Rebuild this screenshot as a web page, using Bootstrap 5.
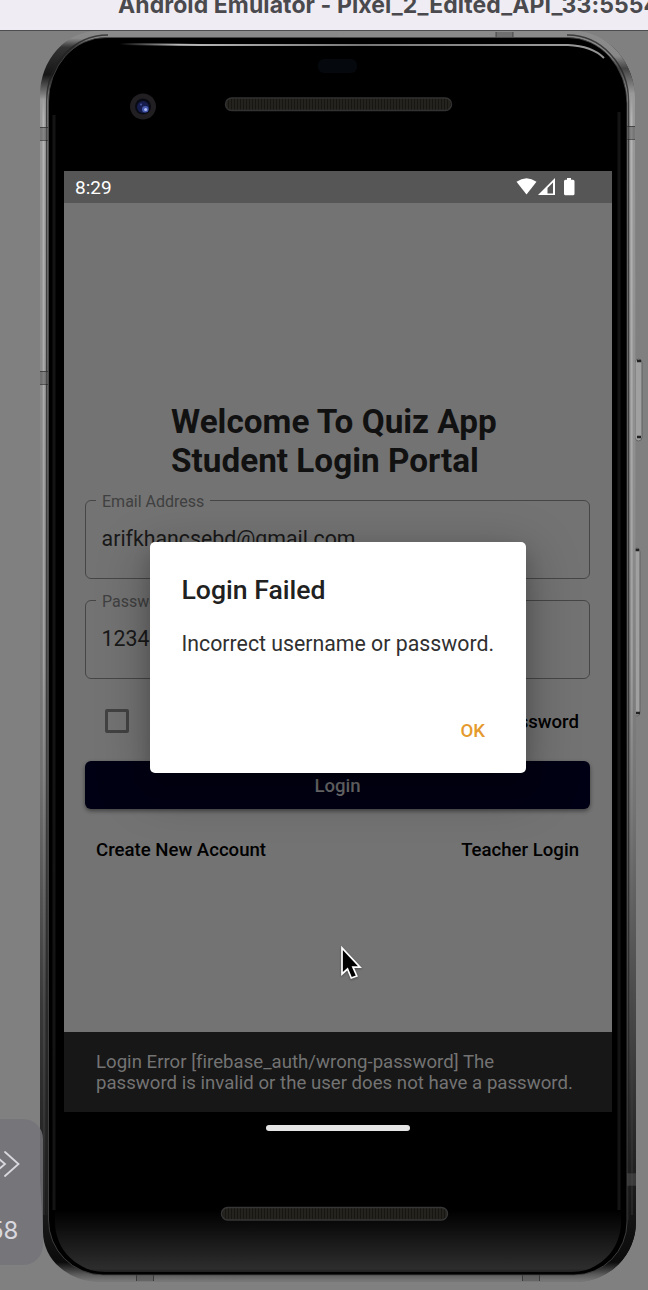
<!DOCTYPE html>
<html lang="en">
<head>
<meta charset="utf-8">
<meta name="viewport" content="width=device-width, initial-scale=1">
<title>Quiz App - Student Login</title>
<link href="https://cdn.jsdelivr.net/npm/bootstrap@5.3.0/dist/css/bootstrap.min.css" rel="stylesheet">
<style>
body{width:648px;height:1290px;background:#808080;font-family:Roboto,"Liberation Sans",sans-serif;color:#000}
.titlebar{height:31px;background:#efedf3;border-bottom:1px solid #4d4d4f;font-family:Inter,sans-serif;font-weight:700;font-size:23px;line-height:30px;letter-spacing:.09px;color:#4a494d;white-space:nowrap}
.titlebar span{display:block;margin-left:118px;margin-top:-10px}
.desk{height:1259px}
.shell{width:648px;height:1259px}
.bezel-top{height:140px}
.screen{width:548px;height:941px;margin-left:64px;background:#737373}
.statusbar{height:32px;background:#565656;color:#fff;font-size:19px;padding:2px 36px 0 11px}
.app-form{padding:199px 22px 0 21px;height:829px}
.welcome{font-size:33.3px;line-height:39px;font-weight:700;color:#111;margin-left:86px}
.field{position:relative;height:79px;border:1.6px solid #464646;border-radius:6px;padding:26px 15.6px 0}
#email{margin-top:20px}
#pass{margin-top:21px}
.field label{position:absolute;left:10px;top:-9px;height:20px;line-height:20px;background:#737373;padding:0 6px 0 6px;font-size:16px;color:#404040}
.field div{font-size:21.3px;line-height:24px;color:#191919}
.options{margin-top:30px;height:24px;padding-right:11px}
.check-square{width:24px;height:24px;border:3px solid #424242;border-radius:2px;margin-left:20px}
.linkish{font-size:18.6px;font-weight:500;line-height:24px}
.options .linkish{padding-top:1px}
.login-btn{height:48px;margin-top:28px;background:#000014;border:0;border-radius:6px;color:#737373;font-size:18.6px;font-weight:500;box-shadow:0 2px 4px rgba(0,0,0,.45);padding:3px 0 0}
.login-btn:hover{background:#000014;color:#737373}
.links{margin-top:29px;padding:0 11px}
.snack{height:80px;background:#171717;color:#737373;font-size:18.6px;line-height:21.3px;letter-spacing:.015px;padding:20px 32px}
.alert-card{left:149.5px;top:511px;width:376.5px;height:231px;background:#fff;border-radius:5px;padding:32px 32px;box-shadow:0 14px 50px 4px rgba(0,0,0,.26),0 10px 18px rgba(0,0,0,.16)}
.alert-card h2{font-size:26.6px;line-height:32px;font-weight:500;color:#212121;margin:0}
.alert-card p{font-size:21.3px;line-height:28px;color:#303030;margin:24px 0 0;white-space:nowrap}
.alert-card b{font-weight:500;font-size:18.6px;line-height:24px;color:#e59a2e;margin:61px 9px 0 0}
.home-bar{width:144px;height:6px;border-radius:3px;background:#e4e4e4;margin:13px 0 0 266px}
.cursor{left:340px;top:914px;filter:drop-shadow(0 1px 1px rgba(0,0,0,.35))}
.mini-panel{left:0;top:1088px;width:43px;height:146px;background:rgba(116,115,121,.82);border-radius:0 20px 20px 0}
.mini-panel span{margin:29px 0 0 -11px;font-family:Inter,sans-serif;font-size:24px;color:#d9d8de;display:block;line-height:30px}
</style>
</head>
<body class="overflow-hidden">
<header class="titlebar overflow-hidden"><span>Android Emulator - Pixel_2_Edited_API_33:5554</span></header>
<main class="desk position-relative overflow-hidden">
  <!-- device body: metal rim, glass, camera and speakers -->
  <svg class="shell position-absolute top-0 start-0" viewBox="0 31 648 1259" aria-hidden="true">
    <defs>
      <linearGradient id="rim" x1="0" y1="31" x2="0" y2="1281" gradientUnits="userSpaceOnUse">
        <stop offset="0" stop-color="#8b8b8b"/><stop offset=".006" stop-color="#888"/><stop offset=".013" stop-color="#333"/><stop offset=".035" stop-color="#161616"/><stop offset=".055" stop-color="#999"/><stop offset=".3" stop-color="#8a8a8a"/><stop offset=".6" stop-color="#707070"/><stop offset=".78" stop-color="#383838"/><stop offset=".94" stop-color="#1c1c1c"/><stop offset=".985" stop-color="#0b0b0b"/><stop offset=".995" stop-color="#5c5c5c"/><stop offset="1" stop-color="#777"/>
      </linearGradient>
      <linearGradient id="rimR" x1="0" y1="31" x2="0" y2="1281" gradientUnits="userSpaceOnUse">
        <stop offset="0" stop-color="#8b8b8b"/><stop offset=".02" stop-color="#888"/><stop offset=".03" stop-color="#444"/><stop offset=".05" stop-color="#999"/><stop offset=".4" stop-color="#8c8c8c"/><stop offset=".62" stop-color="#747474"/><stop offset=".8" stop-color="#444"/><stop offset=".96" stop-color="#111"/><stop offset=".985" stop-color="#0b0b0b"/><stop offset=".995" stop-color="#5c5c5c"/><stop offset="1" stop-color="#777"/>
      </linearGradient>
      <linearGradient id="edge" x1="0" y1="95" x2="0" y2="1230" gradientUnits="userSpaceOnUse">
        <stop offset="0" stop-color="#b4b4b4" stop-opacity="0"/><stop offset=".02" stop-color="#b4b4b4"/><stop offset=".5" stop-color="#a0a0a0"/><stop offset=".8" stop-color="#484848"/><stop offset="1" stop-color="#222"/>
      </linearGradient>
      <linearGradient id="chin" x1="0" y1="1210" x2="0" y2="1275" gradientUnits="userSpaceOnUse">
        <stop offset="0" stop-color="#000"/><stop offset=".9" stop-color="#2d2d2d"/><stop offset="1" stop-color="#151515"/>
      </linearGradient>
      <linearGradient id="shine" x1="120" y1="0" x2="605" y2="0" gradientUnits="userSpaceOnUse">
        <stop offset="0" stop-color="#ccc" stop-opacity="0"/><stop offset=".12" stop-color="#bbb"/><stop offset=".5" stop-color="#777"/><stop offset=".9" stop-color="#999"/><stop offset="1" stop-color="#ccc" stop-opacity=".7"/>
      </linearGradient>
      <pattern id="mesh" width="3" height="3" patternUnits="userSpaceOnUse"><path fill="#25231e" d="M0 0h3v3H0z"/><path fill="#171613" d="M0 0h1v3H0z"/></pattern>
      <clipPath id="rightHalf"><path d="M338 31h310v1259H338z"/></clipPath>
    </defs>
    <path fill="#a0a0a0" stroke="#626262" d="M635 363q0-4 3.500-4t3.500 4v74q0 4-3.500 4t-3.500-4zM634 552q0-4 3-4t3 4v159q0 5-3 5t-3-5z"/>
    <path stroke="#222" stroke-width="2.500" d="M637 361h4M637 437h4M635 550h4M636 713h4"/>
    <path fill="url(#rim)" d="M98 31H574A62 68 0 0 1 635 99L636 1222A60 60 0 0 1 576 1282H100A57 50 0 0 1 43 1232L40 1180V95A58 64 0 0 1 98 31z"/>
    <path fill="url(#rimR)" clip-path="url(#rightHalf)" d="M98 31H574A62 68 0 0 1 635 99L636 1222A60 60 0 0 1 576 1282H100A57 50 0 0 1 43 1232V95A58 64 0 0 1 98 31z"/>
    <path fill="none" stroke="url(#edge)" stroke-width="2" d="M43.500 95L44 1215M631.500 95L632 1215"/>
    <path fill="none" stroke="#222" stroke-width="1.500" stroke-opacity=".75" d="M108 35A61 66 0 0 0 46.700 101L47 1215M567 35A61 66 0 0 1 628.500 101L628.600 1220"/>
    <path fill="#555" fill-opacity=".5" d="M40 127h8v13h-8zM40 371h8v13h-8zM627 126h8v13h-8zM496 32h17v5h-17zM136 1275h18v6h-18zM522 1275h18v6h-18zM627 1173h9v13h-9z"/>
    <path fill="none" stroke="#222" stroke-opacity=".6" d="M40 127.500h8M40 140.500h8M40 371.500h8M40 384.500h8M627 126.500h8M627 139.500h8M496 32v5M513 32v5M136.500 1275v6M153.500 1275v6M522.500 1275v6M539.500 1275v6M627 1173h9M627 1186h9"/>
    <path fill="#000" stroke="#4a4a4a" stroke-opacity=".8" d="M106 37.500H568A59 66 0 0 1 627 103.500V1222A53 53 0 0 1 574 1275H103A55 55 0 0 1 48.500 1220V102A57 64 0 0 1 106 37.500z"/>
    <path fill="url(#chin)" d="M55 1200H621V1222A49 50 0 0 1 572 1272H105A50 50 0 0 1 55 1222z"/>
    <path fill="none" stroke="#141414" stroke-width="3" d="M54 115V1210M619 112V1210"/>
    <rect x="318" y="59" width="39" height="14" rx="6" fill="#05080c"/>
    <path fill="none" stroke="url(#shine)" stroke-width="2" d="M120 44Q160 44.500 200 45H568Q592 46 604 58"/>
    <circle cx="143" cy="106.500" r="13" fill="#211f21"/><circle cx="143" cy="106.500" r="8" fill="#080a14"/><circle cx="143" cy="107" r="6" fill="#161d4c"/><circle cx="145.300" cy="109.300" r="3.300" fill="#465bad"/><circle cx="145.600" cy="109.500" r="1.500" fill="#b0bcf2"/><circle cx="141" cy="104.500" r="1" fill="#4656a0"/>
    <rect x="225.500" y="98" width="226" height="12.500" rx="6.200" fill="url(#mesh)" stroke="#323232" stroke-width="1.400"/>
    <rect x="221.500" y="1207.500" width="226" height="12.500" rx="6.200" fill="url(#mesh)" stroke="#363636" stroke-width="1.400"/>
  </svg>

  <div class="position-relative">
    <div class="bezel-top"></div>
    <section class="screen d-flex flex-column">
      <div class="statusbar d-flex align-items-center justify-content-between">
        <span>8:29</span>
        <svg width="60" height="20" viewBox="516 178 60 20" fill="#fff"><path d="M516.500 181.800Q526.500 174.500 536.500 181.800L526.500 194.500z"/><path fill-rule="evenodd" d="M538 195L555 178V195zM547.500 193.500H553V182.500L547.500 188z"/><path d="M567 178h4v1.800h2q1.500 0 1.500 1.500v12.500q0 1.500-1.500 1.500h-7.500q-1.500 0-1.500-1.500v-12.500q0-1.500 1.500-1.500H567z"/></svg>
      </div>
      <div class="app-form">
        <h1 class="welcome mb-0">Welcome To Quiz App<br>Student Login Portal</h1>
        <div class="field" id="email"><label>Email Address</label><div>arifkhancsebd@gmail.com</div></div>
        <div class="field" id="pass"><label>Password</label><div>1234</div></div>
        <div class="options d-flex align-items-center justify-content-between"><span class="check-square"></span><span class="linkish">Forgot Password</span></div>
        <button class="btn login-btn w-100" type="button">Login</button>
        <div class="links linkish d-flex justify-content-between"><span>Create New Account</span><span>Teacher Login</span></div>
      </div>
      <div class="snack text-nowrap">Login Error [firebase_auth/wrong-password] The<br>password is invalid or the user does not have a password.</div>
    </section>
    <div class="home-bar"></div>
  </div>

  <div class="alert-card position-absolute d-flex flex-column" role="alertdialog">
    <h2>Login Failed</h2>
    <p>Incorrect username or password.</p>
    <b class="align-self-end">OK</b>
  </div>
  <svg class="cursor position-absolute" width="24" height="36" viewBox="0 0 24 36"><path d="M2 3V29L7.500 24L11.300 33L16.800 31L12.900 22.200H20z" fill="#000" stroke="#fff" stroke-width="1.700"/></svg>
  <aside class="mini-panel position-absolute overflow-hidden">
    <svg class="d-block" width="43" height="68" viewBox="0 0 43 68" fill="none" stroke="#d9d8de" stroke-width="1.800" stroke-linecap="round"><path d="M5 33l13.500 12L5 57M-9 33L5 45L-9 57"/></svg>
    <span>58</span>
  </aside>
</main>
<script src="https://cdn.jsdelivr.net/npm/bootstrap@5.3.0/dist/js/bootstrap.bundle.min.js"></script>
</body>
</html>
